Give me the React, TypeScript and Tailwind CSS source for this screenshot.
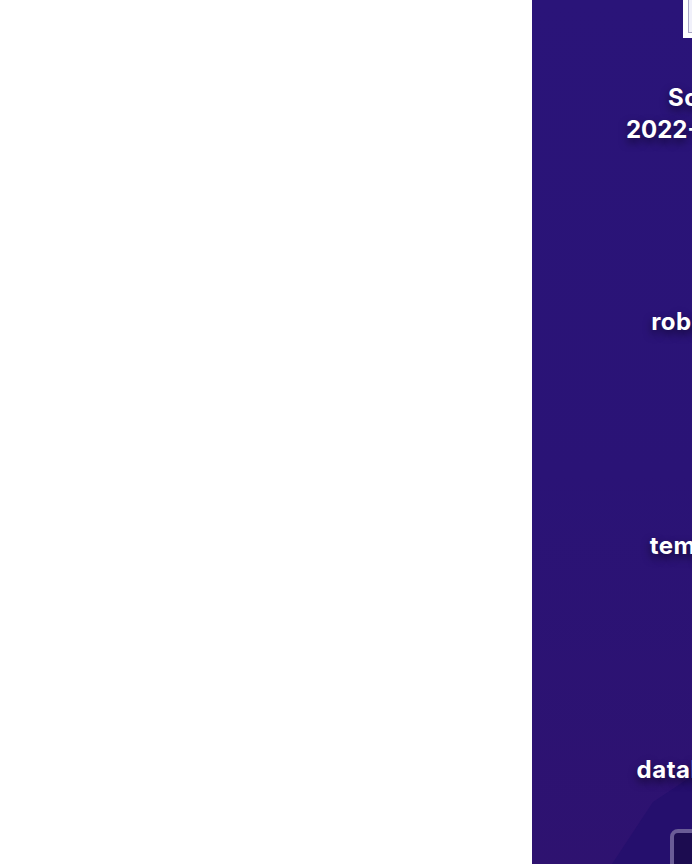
import React from 'react'

const font = "font-['Inter','Liberation_Sans',sans-serif]"
const spaced = 'tracking-[0.02em]'

function Label({ children, className = '' }: { children: React.ReactNode; className?: string }) {
  return (
    <p className={`text-center text-2xl leading-8 font-bold whitespace-nowrap text-white [text-shadow:0_4px_8px_rgba(0,0,0,0.55)] ${className}`}>
      {children}
    </p>
  )
}

export default function App() {
  return (
    <div className={`flex h-[864px] w-[692px] overflow-hidden bg-white ${font}`}>
      <main className="w-[532px] shrink-0 bg-white" />
      <aside className="relative flex w-[320px] shrink-0 flex-col items-center overflow-hidden bg-[linear-gradient(180deg,#2a1479_0%,#2a1376_55%,#2e1270_100%)]">
        {/* darker diagonal band at the bottom */}
        <svg className="absolute top-0 left-0 h-[864px] w-[320px]" viewBox="0 0 320 864">
          <polygon points="80,864 121,802 160,776 320,700 320,864" fill="#250f6d" />
        </svg>

        <div className="relative flex w-full flex-col items-center">
          <div className="ml-[151px] h-[38px] w-[18px] self-start border-b-[5px] border-l-[5px] border-white bg-[#f0f0fa] shadow-[inset_1px_-1px_0_#a9a6c4]" />
          <Label className={`mt-11 pr-0.5 ${spaced}`}>Sco</Label>
          <Label className="pl-0.5">2022-2023</Label>
          <Label className={`mt-[160px] pr-[3px] ${spaced}`}>robots</Label>
          <Label className={`mt-[192px] pr-px ${spaced}`}>temple</Label>
          <Label className={`mt-[192px] pl-0.5 ${spaced}`}>database</Label>
          <div className="mt-[43px] ml-[138px] h-[60px] w-[60px] self-start rounded-lg border-4 border-[#6a5c96] bg-[#1c0c50]" />
        </div>
      </aside>
    </div>
  )
}
